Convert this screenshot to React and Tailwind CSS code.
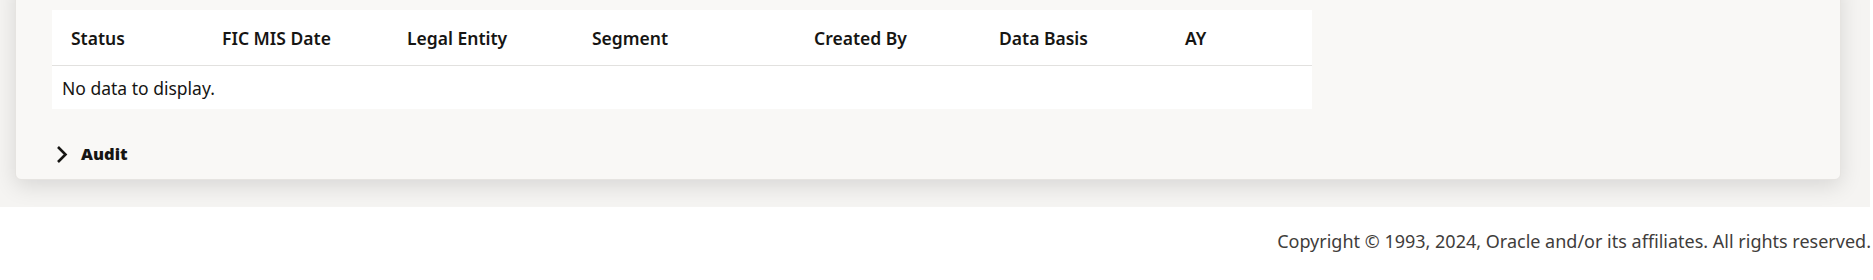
const columns = [
  { label: "Status", width: "w-[151px]" },
  { label: "FIC MIS Date", width: "w-[185px]" },
  { label: "Legal Entity", width: "w-[185px]" },
  { label: "Segment", width: "w-[222px]" },
  { label: "Created By", width: "w-[185px]" },
  { label: "Data Basis", width: "w-[186px]" },
  { label: "AY", width: "flex-1" },
];

function Chevron() {
  return (
    <svg width="12" height="17" viewBox="0 0 12 17" fill="none">
      <path
        d="M2 1 L9.5 8.5 L2 16"
        stroke="#161513"
        strokeWidth="2.6"
        strokeLinecap="butt"
        strokeLinejoin="miter"
      />
    </svg>
  );
}

export default function App() {
  return (
    <div className="w-[1873px] bg-white font-['Noto_Sans',sans-serif] text-[#161513]">
      {/* scrolled content area */}
      <div className="w-[1870px] h-[207px] overflow-hidden bg-[#f5f4f2] pl-[15px] pr-[29px]">
        <div className="-mt-[20px] pt-[29px] pb-[15px] px-[36px] bg-[#f9f8f6] border border-[#e6e4e1] rounded-[6px] shadow-[0_6px_22px_rgba(0,0,0,0.12)]">
          <div className="w-[1260px] bg-white">
            <div className="flex h-[56px] items-center border-b border-[#e2e1df]">
              {columns.map((c) => (
                <div
                  key={c.label}
                  className={`${c.width} pl-[19px] text-[17.5px] font-semibold pt-[1px]`}
                >
                  {c.label}
                </div>
              ))}
            </div>
            <div className="h-[43px] flex items-center pl-[10px] pt-[1px] text-[17.5px]">
              No data to display.
            </div>
          </div>
          <div className="flex items-center h-[20px] mt-[35px] pl-[4px] gap-[13px]">
            <Chevron />
            <span className="text-[16.5px] font-black">Audit</span>
          </div>
        </div>
      </div>
      <div className="h-[73px] flex justify-end pr-[2px] pt-[21px]">
        <span className="text-[18px] text-[#3f3d3b]">
          Copyright © 1993, 2024, Oracle and/or its affiliates. All rights reserved.
        </span>
      </div>
    </div>
  );
}
